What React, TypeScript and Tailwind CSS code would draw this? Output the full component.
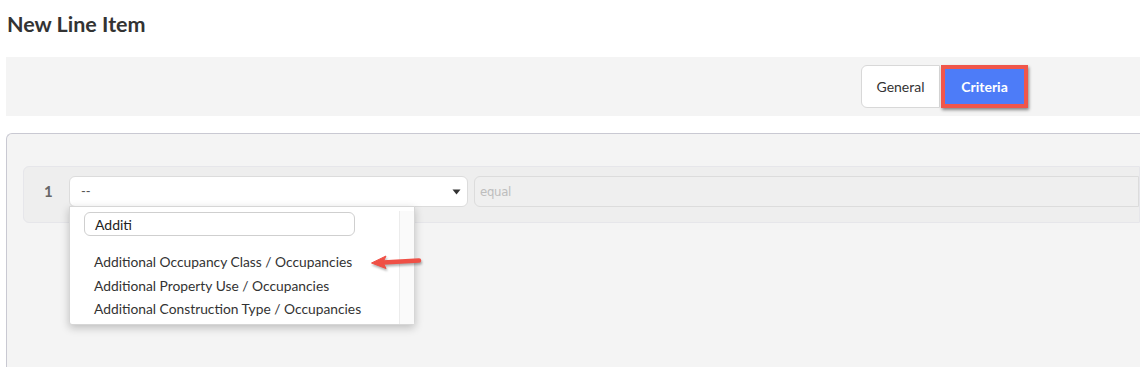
const options = [
  "Additional Occupancy Class / Occupancies",
  "Additional Property Use / Occupancies",
  "Additional Construction Type / Occupancies",
];

// red annotation arrow pointing left
const Arrow = () => (
  <svg width="54" height="18" viewBox="0 0 54 18" className="drop-shadow-[1px_2px_1px_rgba(0,0,0,0.3)]">
    <path d="M49 7.6 L13 9.4" stroke="#ef5046" strokeWidth="4.5" strokeLinecap="round" />
    <path d="M1.5 10 L16 3 L13 9.4 L16 15.5 Z" fill="#ef5046" stroke="#ef5046" strokeWidth="1" strokeLinejoin="round" />
  </svg>
);

export default function App() {
  return (
    <div className="w-[1140px] h-[367px] overflow-hidden bg-white text-[#333] font-['Lato',sans-serif]">
      <h1 className="pl-[7px] pt-[12px] h-[57px] text-[21.5px] font-bold leading-[24px] text-[#333]">New Line Item</h1>

      <div className="ml-[6px] h-[59px] bg-[#f4f4f4] flex justify-end items-start pt-[8px] pr-[112px]">
        <div className="flex">
          <button className="h-[43px] w-[79px] bg-white border border-[#d8d8d8] rounded-l-[6px] text-[14px] text-[#333]">General</button>
          <button className="ml-[1px] h-[43px] w-[87px] bg-[#4d7cf8] border-[4px] border-[#f0564b] shadow-[1px_2px_3px_rgba(0,0,0,0.45)] text-[14px] font-bold text-white">Criteria</button>
        </div>
      </div>

      <div className="mt-[17px] ml-[6px] h-[240px] bg-[#f4f4f4] border-t border-l border-[#c9c9d2] rounded-tl-[6px] pt-[32px] pl-[16px]">
        <div className="relative h-[57px] bg-[#eeeeee] border border-[#e6e6ea] rounded-l-[6px] flex items-start pt-[9px] pl-[20px]">
          <span className="w-[25px] h-[31px] leading-[31px] text-[15px] font-bold text-[#666]">1</span>
          <div className="relative w-[399px]">
            <div className="h-[31px] bg-white border border-[#dcdcdc] rounded-[6px] flex items-center justify-between pl-[11px] pr-[6px]">
              <span className="text-[13px] text-[#555]">--</span>
              <svg width="9" height="6" viewBox="0 0 9 6"><path d="M0.5 0.5 H8.5 L4.5 5.5 Z" fill="#333" /></svg>
            </div>
            <div className="absolute left-0 top-[30px] w-[346px] h-[119px] bg-white border border-[#d6d6d6] rounded-b-[3px] shadow-[0_3px_8px_rgba(0,0,0,0.22)] flex z-10">
              <div className="flex-1 pl-[14px] pt-[5px]">
                <div className="w-[271px] h-[24px] border border-[#cfcfcf] rounded-[6px] flex items-center pl-[10px] text-[14px] text-[#222]">Additi</div>
                <ul className="mt-[14px] flex flex-col">
                  {options.map((o) => (
                    <li key={o} className="pl-[10px] h-[23.5px] text-[13.8px] leading-[23.5px] text-[#333] whitespace-nowrap">{o}</li>
                  ))}
                </ul>
              </div>
              <div className="w-[15px] mt-[4px] bg-[#fafafa] border-l border-[#ececec]" />
            </div>
            <div className="absolute left-[301px] top-[77px] z-20">
              <Arrow />
            </div>
          </div>
          <div className="ml-[6px] flex-1 h-[31px] bg-[#efefef] border border-[#dcdcdc] rounded-l-[6px] flex items-center pl-[5px]">
            <span className="text-[13px] text-[#bdbdbd] font-['Liberation_Sans_Narrow','DejaVu_Sans_Condensed',sans-serif] tracking-[-0.3px]">equal</span>
          </div>
        </div>
      </div>
    </div>
  );
}
